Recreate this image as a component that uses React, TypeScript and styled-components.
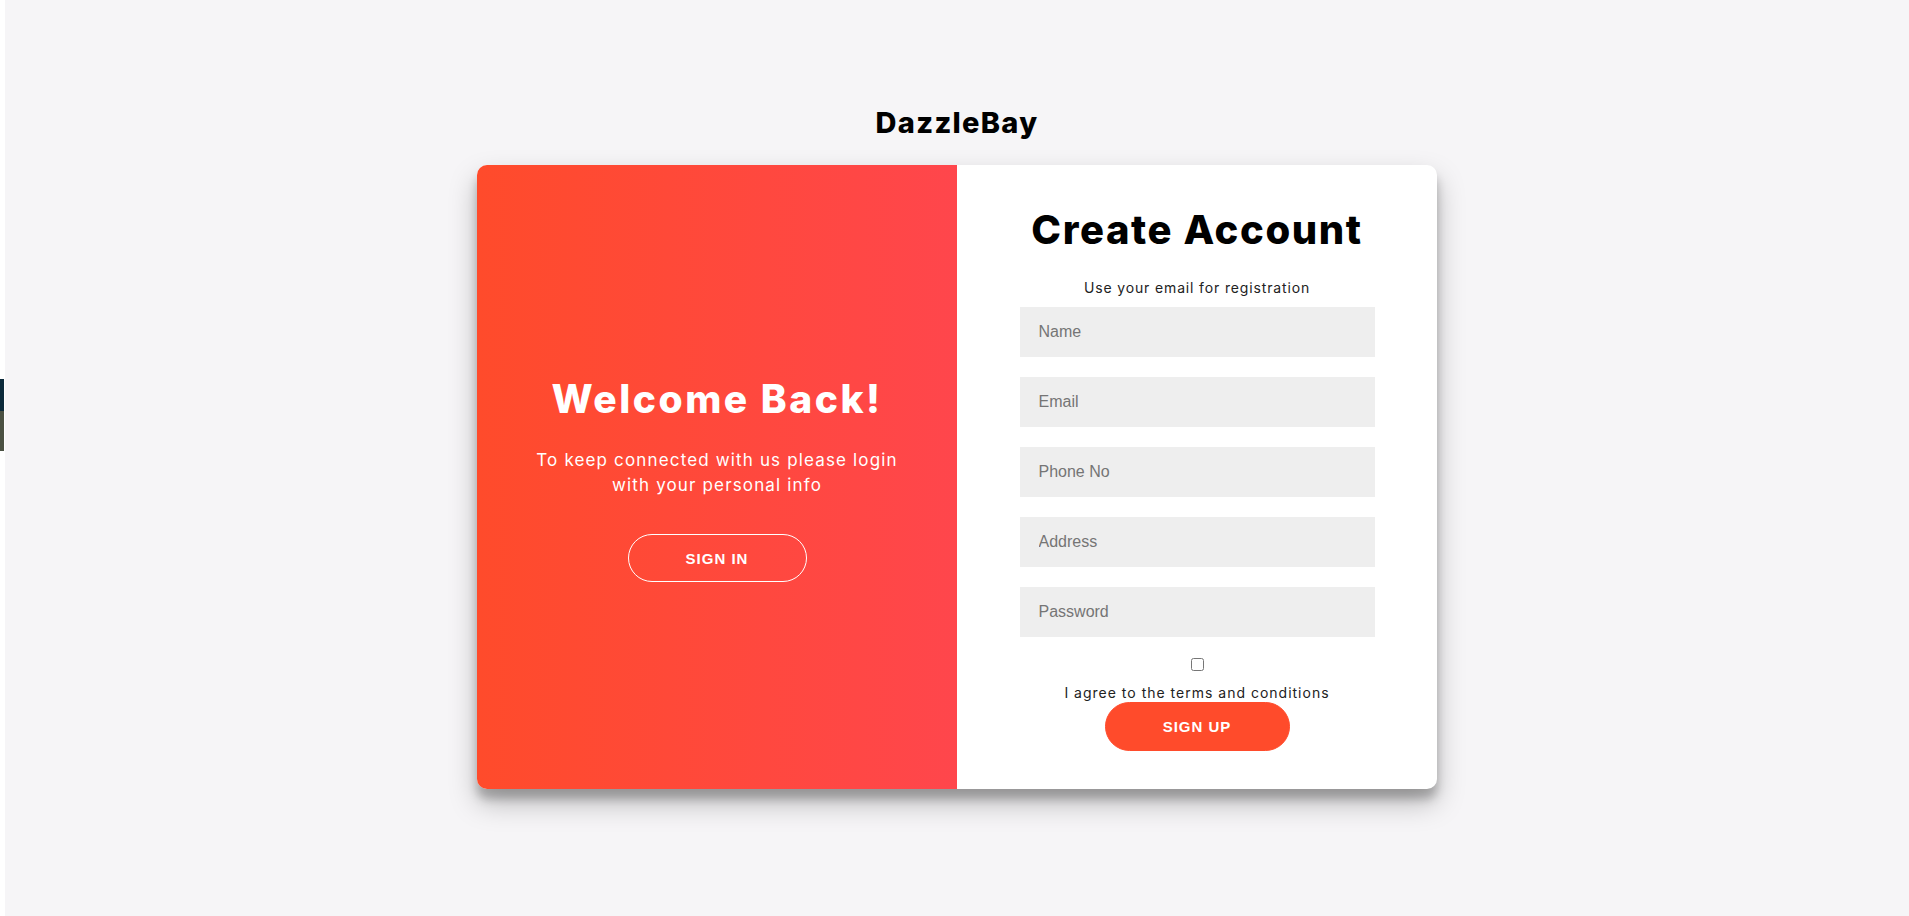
import React from "react";
import styled, { createGlobalStyle } from "styled-components";

const GlobalStyle = createGlobalStyle`
  html, body {
    margin: 0;
    padding: 0;
    height: 100%;
  }
  body {
    background: #ffffff;
    font-family: "Inter", "Liberation Sans", sans-serif;
    overflow: hidden;
  }
  * { box-sizing: border-box; }
`;

const Page = styled.div`
  display: flex;
  width: 1909px;
  height: 916px;
`;

const EdgeStrip = styled.div`
  width: 5px;
  flex: none;
  background: #ffffff;
  display: flex;
  flex-direction: column;
  padding-top: 379px;
`;

const EdgeBlock = styled.div<{ $color: string; $h: number }>`
  width: 4px;
  height: ${(p) => p.$h}px;
  background: ${(p) => p.$color};
`;

const Main = styled.main`
  flex: 1;
  background: #f6f5f7;
  display: flex;
  flex-direction: column;
  align-items: center;
  padding-top: 108px;
`;

const Brand = styled.h2`
  margin: 0 0 28px;
  font-family: "Inter", sans-serif;
  font-weight: 800;
  font-size: 29px;
  line-height: 29px;
  letter-spacing: 1.3px;
  color: #000;
`;

const Card = styled.div`
  width: 960px;
  height: 624px;
  border-radius: 10px;
  overflow: hidden;
  display: grid;
  grid-template-columns: 480px 480px;
  background: #fff;
  box-shadow: 0 14px 28px rgba(0, 0, 0, 0.25), 0 10px 10px rgba(0, 0, 0, 0.22);
`;

const Overlay = styled.section`
  background: linear-gradient(to right, #ff4b2b, #ff464c);
  color: #fff;
  display: flex;
  flex-direction: column;
  align-items: center;
  text-align: center;
  padding: 214px 40px 0;
`;

const Heading = styled.h1<{ $size: number; $spacing: number }>`
  margin: 0;
  font-family: "Inter", sans-serif;
  font-weight: 800;
  font-size: ${(p) => p.$size}px;
  line-height: ${(p) => p.$size}px;
  letter-spacing: ${(p) => p.$spacing}px;
  white-space: nowrap;
`;

const Lead = styled.p`
  margin: 30px 0 0;
  max-width: 396px;
  font-family: "Inter", sans-serif;
  font-weight: 400;
  font-size: 17px;
  line-height: 25px;
  letter-spacing: 1.15px;
`;

const PillButton = styled.button<{ $ghost?: boolean; $w: number }>`
  width: ${(p) => p.$w}px;
  height: ${(p) => (p.$ghost ? 48 : 49)}px;
  border-radius: 25px;
  border: 1px solid ${(p) => (p.$ghost ? "#ffffff" : "#ff4b2b")};
  background: ${(p) => (p.$ghost ? "transparent" : "#ff4b2b")};
  color: #fff;
  font-family: "Liberation Sans", Arial, sans-serif;
  font-weight: 700;
  font-size: 15px;
  letter-spacing: 1px;
  text-transform: uppercase;
  padding: 0;
  cursor: pointer;
`;

const GhostButton = styled(PillButton)`
  margin-top: 36px;
`;

const FormPanel = styled.form`
  display: flex;
  flex-direction: column;
  align-items: center;
  text-align: center;
  padding-top: 45px;
  color: #000;
`;

const Subtitle = styled.span`
  margin-top: 28px;
  font-family: "Inter", sans-serif;
  font-size: 14px;
  line-height: 20px;
  letter-spacing: 0.85px;
  color: #222;
`;

const Fields = styled.div`
  margin-top: 9px;
  display: flex;
  flex-direction: column;
  gap: 20px;
`;

const Input = styled.input`
  width: 355px;
  height: 50px;
  border: none;
  outline: none;
  background: #eeeeee;
  padding: 0 19px;
  font-family: "Liberation Sans", Arial, sans-serif;
  font-size: 16px;
  color: #333;
  &::placeholder {
    color: #757575;
  }
`;

const Check = styled.input`
  display: block;
  width: 13px;
  height: 13px;
  margin: 21px 0 0;
`;

const Terms = styled.label`
  margin-top: 13px;
  font-family: "Inter", sans-serif;
  font-size: 14px;
  line-height: 17px;
  letter-spacing: 1px;
  color: #222;
`;

const SubmitButton = styled(PillButton)`
  margin-top: 1px;
`;

export default function App() {
  return (
    <>
      <GlobalStyle />
      <Page>
        <EdgeStrip>
          <EdgeBlock $color="#0c2a3b" $h={32} />
          <EdgeBlock $color="#4b5143" $h={40} />
        </EdgeStrip>
        <Main>
          <Brand>DazzleBay</Brand>
          <Card>
            <Overlay>
              <Heading $size={39} $spacing={2.5}>Welcome Back!</Heading>
              <Lead>To keep connected with us please login with your personal info</Lead>
              <GhostButton type="button" $ghost $w={179}>
                Sign In
              </GhostButton>
            </Overlay>
            <FormPanel onSubmit={(e) => e.preventDefault()}>
              <Heading $size={40} $spacing={1.6}>Create Account</Heading>
              <Subtitle>Use your email for registration</Subtitle>
              <Fields>
                <Input type="text" placeholder="Name" />
                <Input type="email" placeholder="Email" />
                <Input type="tel" placeholder="Phone No" />
                <Input type="text" placeholder="Address" />
                <Input type="password" placeholder="Password" />
              </Fields>
              <Check type="checkbox" id="terms" />
              <Terms htmlFor="terms">I agree to the terms and conditions</Terms>
              <SubmitButton type="submit" $w={185}>
                Sign Up
              </SubmitButton>
            </FormPanel>
          </Card>
        </Main>
      </Page>
    </>
  );
}
